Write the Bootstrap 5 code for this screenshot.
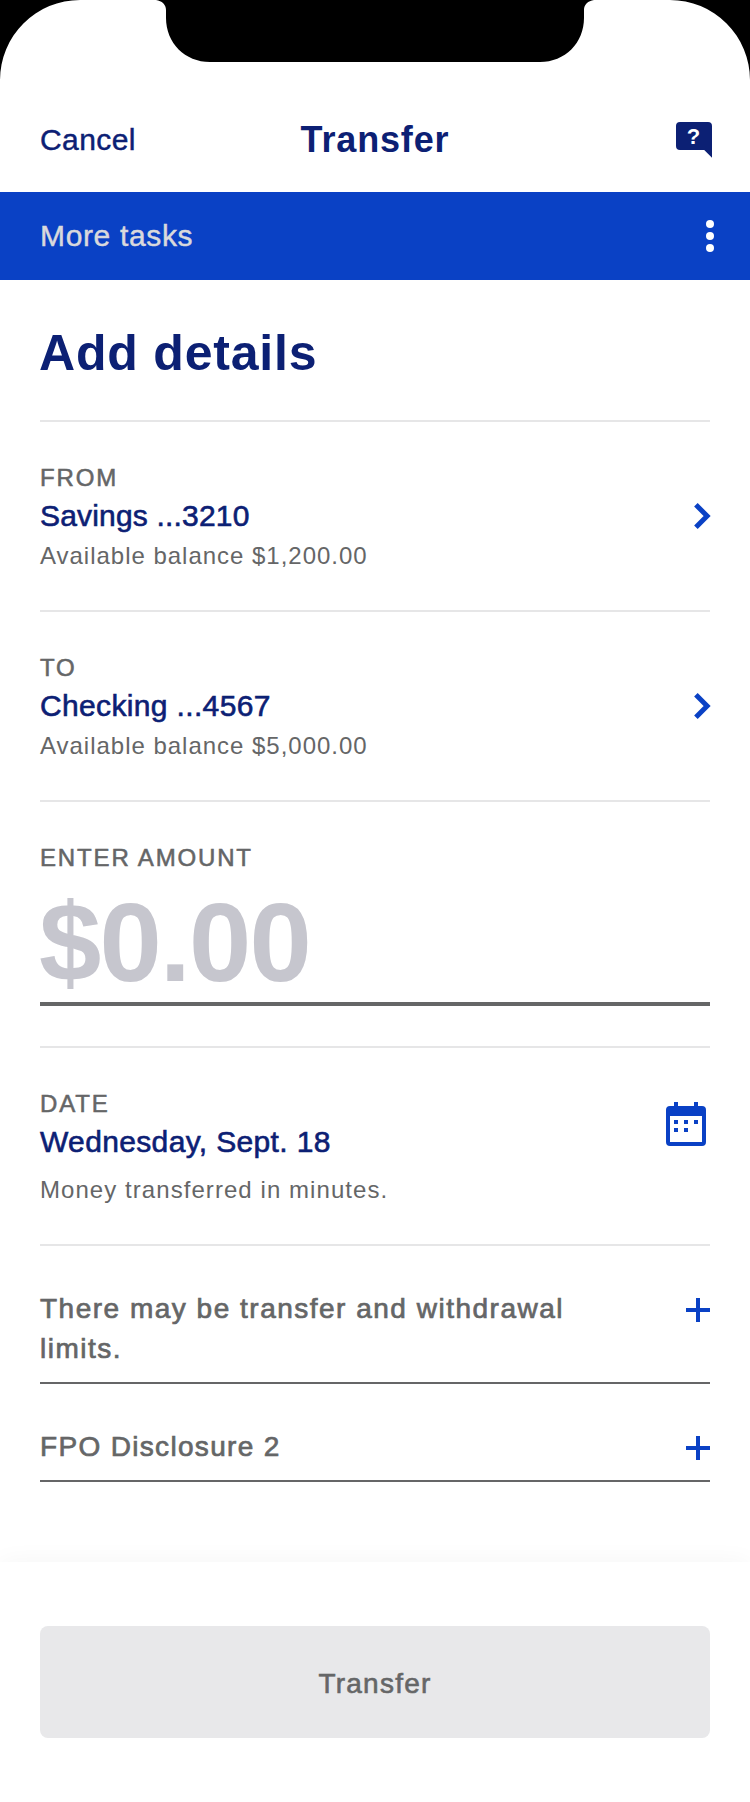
<!DOCTYPE html>
<html lang="en">
<head>
<meta charset="utf-8">
<meta name="viewport" content="width=device-width, initial-scale=1">
<title>Transfer</title>
<link rel="stylesheet" href="https://cdn.jsdelivr.net/npm/bootstrap@5.3.0/dist/css/bootstrap.min.css">
<style>
  :root { --navy: #0c2074; --brand: #0a41c5; --ink: #656667; --rule: #e6e6e7; }
  body { font-family: "Liberation Sans", Arial, sans-serif; color: var(--ink); width: 750px; min-height: 1802px; overflow: hidden; }
  svg { overflow: visible; flex: none; display: block; }
  .gutter { padding-left: 40px; padding-right: 40px; }
  .topnav { height: 112px; padding-top: 8px; padding-right: 38px; }
  .topnav > * { flex: 1 1 0; }
  .navy { color: var(--navy); }
  .medium { -webkit-text-stroke: .6px currentColor; }
  .cancel { font-size: 30px; letter-spacing: .4px; line-height: 40px; -webkit-text-stroke-width: .45px; }
  .title { font-size: 36px; letter-spacing: .85px; line-height: 40px; padding-right: 2px; }
  .tasks { height: 88px; background: var(--brand); color: #d9d9dc; font-size: 30px; letter-spacing: .65px; padding-right: 36px; -webkit-text-stroke-width: .45px; }
  .tasks span { padding-bottom: 2px; }
  .heading { height: 140px; padding-top: 6px; font-size: 50px; letter-spacing: .8px; margin-left: -1px; }
  .section { border-top: 2px solid var(--rule); padding: 37px 0 33px; }
  .amount-section { padding-bottom: 40px; }
  .eyebrow { font-size: 24px; line-height: 38px; letter-spacing: 1.85px; -webkit-text-stroke-width: .55px; }
  .value { font-size: 30px; line-height: 38px; letter-spacing: .35px; }
  .value.tight { letter-spacing: .18px; }
  .note { font-size: 24px; line-height: 42px; letter-spacing: .98px; }
  .note.loose { letter-spacing: 1.06px; margin-top: 8px; }
  .chev { margin-top: 45px; }
  .calendar { margin: 17px 4px 0 0; }
  .amount { font-size: 112px; line-height: 112px; letter-spacing: -1.9px; text-indent: -1px; color: #c6c6ce; margin-top: 10px; padding: 0 0 3px; border-bottom: 4px solid var(--ink); }
  .disclosure { font-size: 28px; line-height: 40px; letter-spacing: 1.5px; padding: 43px 0 13px; border-bottom: 2px solid var(--ink); -webkit-text-stroke-width: .7px; }
  .disclosure.tight { letter-spacing: 1.33px; }
  .disclosure span { max-width: 560px; }
  .plus { margin-top: 9px; }
  .actions { margin-top: 80px; height: 240px; padding-top: 64px; background: #fff; box-shadow: 0 0 24px rgba(0,0,0,.045); }
  .submit, .submit:disabled { height: 112px; width: 100%; border: 0; border-radius: 8px; background: #e8e8ea; color: var(--ink); opacity: 1; font-size: 28px; letter-spacing: 1.25px; padding: 4px 0 0; }
</style>
</head>
<body class="bg-white">
<svg width="750" height="80" viewBox="0 0 750 80" aria-hidden="true">
  <path d="M0 0H80A80 80 0 0 0 0 80Z"/>
  <path d="M750 0H670A80 80 0 0 1 750 80Z"/>
  <path d="M156 0C162 .8 166 4.5 166 10V18C166 43 185 62 210 62H540C565 62 584 43 584 18V10C584 4.5 588 .8 594 0Z"/>
</svg>

<nav class="topnav gutter d-flex align-items-center">
  <a href="#" class="cancel navy medium text-decoration-none">Cancel</a>
  <h1 class="title navy fw-bold text-center mb-0">Transfer</h1>
  <div class="d-flex justify-content-end">
    <svg class="me-n1" width="36" height="36" viewBox="0 0 36 36" role="img" aria-label="Help">
      <path fill="#0c2074" d="M4 0H32a4 4 0 0 1 4 4V35.8L28.2 28H4a4 4 0 0 1-4-4V4a4 4 0 0 1 4-4Z"/>
      <text x="17.6" y="22" text-anchor="middle" font-size="22" font-weight="700" fill="#fff">?</text>
    </svg>
  </div>
</nav>

<div class="tasks gutter medium d-flex align-items-center justify-content-between">
  <span>More tasks</span>
  <svg width="8" height="32" viewBox="0 0 8 32" fill="#fff" role="img" aria-label="Menu"><circle cx="4" cy="4" r="4"/><circle cx="4" cy="16" r="4"/><circle cx="4" cy="28" r="4"/></svg>
</div>

<main class="gutter">
  <h2 class="heading navy fw-bold d-flex align-items-center mb-0">Add details</h2>

  <section class="section d-flex justify-content-between align-items-start">
    <div>
      <div class="eyebrow medium">FROM</div>
      <div class="value tight navy medium">Savings ...3210</div>
      <div class="note">Available balance $1,200.00</div>
    </div>
    <svg class="chev" width="16" height="24" viewBox="0 0 16 24" fill="none" stroke="#0a41c5" stroke-width="5"><path d="M1.9 .8 13.1 12 1.9 23.2"/></svg>
  </section>

  <section class="section d-flex justify-content-between align-items-start">
    <div>
      <div class="eyebrow medium">TO</div>
      <div class="value navy medium">Checking ...4567</div>
      <div class="note">Available balance $5,000.00</div>
    </div>
    <svg class="chev" width="16" height="24" viewBox="0 0 16 24" fill="none" stroke="#0a41c5" stroke-width="5"><path d="M1.9 .8 13.1 12 1.9 23.2"/></svg>
  </section>

  <section class="section amount-section">
    <div class="eyebrow medium">ENTER AMOUNT</div>
    <div class="amount fw-bold">$0.00</div>
  </section>

  <section class="section d-flex justify-content-between align-items-start">
    <div>
      <div class="eyebrow medium">DATE</div>
      <div class="value navy medium">Wednesday, Sept. 18</div>
      <div class="note loose">Money transferred in minutes.</div>
    </div>
    <svg class="calendar" width="40" height="44" viewBox="0 0 40 44" fill="#0a41c5" role="img" aria-label="Choose date">
      <path fill-rule="evenodd" d="M8 0h4v4H28V0h4v4h4a4 4 0 0 1 4 4V40a4 4 0 0 1-4 4H4a4 4 0 0 1-4-4V8a4 4 0 0 1 4-4H8ZM4 14V40H36V14Z"/>
      <path d="M8 18h4v4H8ZM18 18h4v4h-4ZM28 18h4v4h-4ZM8 26h4v4H8ZM18 26h4v4h-4Z"/>
    </svg>
  </section>

  <section class="section p-0">
    <div class="disclosure medium d-flex justify-content-between align-items-start">
      <span>There may be transfer and withdrawal limits.</span>
      <svg class="plus" width="24" height="24" viewBox="0 0 24 24" stroke="#0a41c5" stroke-width="4"><path d="M12 0V24M0 12H24"/></svg>
    </div>
    <div class="disclosure tight medium d-flex justify-content-between align-items-start">
      <span>FPO Disclosure 2</span>
      <svg class="plus" width="24" height="24" viewBox="0 0 24 24" stroke="#0a41c5" stroke-width="4"><path d="M12 0V24M0 12H24"/></svg>
    </div>
  </section>
</main>

<footer class="actions gutter">
  <button type="button" class="btn submit medium" disabled>Transfer</button>
</footer>
<script src="https://cdn.jsdelivr.net/npm/bootstrap@5.3.0/dist/js/bootstrap.bundle.min.js"></script>
</body>
</html>
